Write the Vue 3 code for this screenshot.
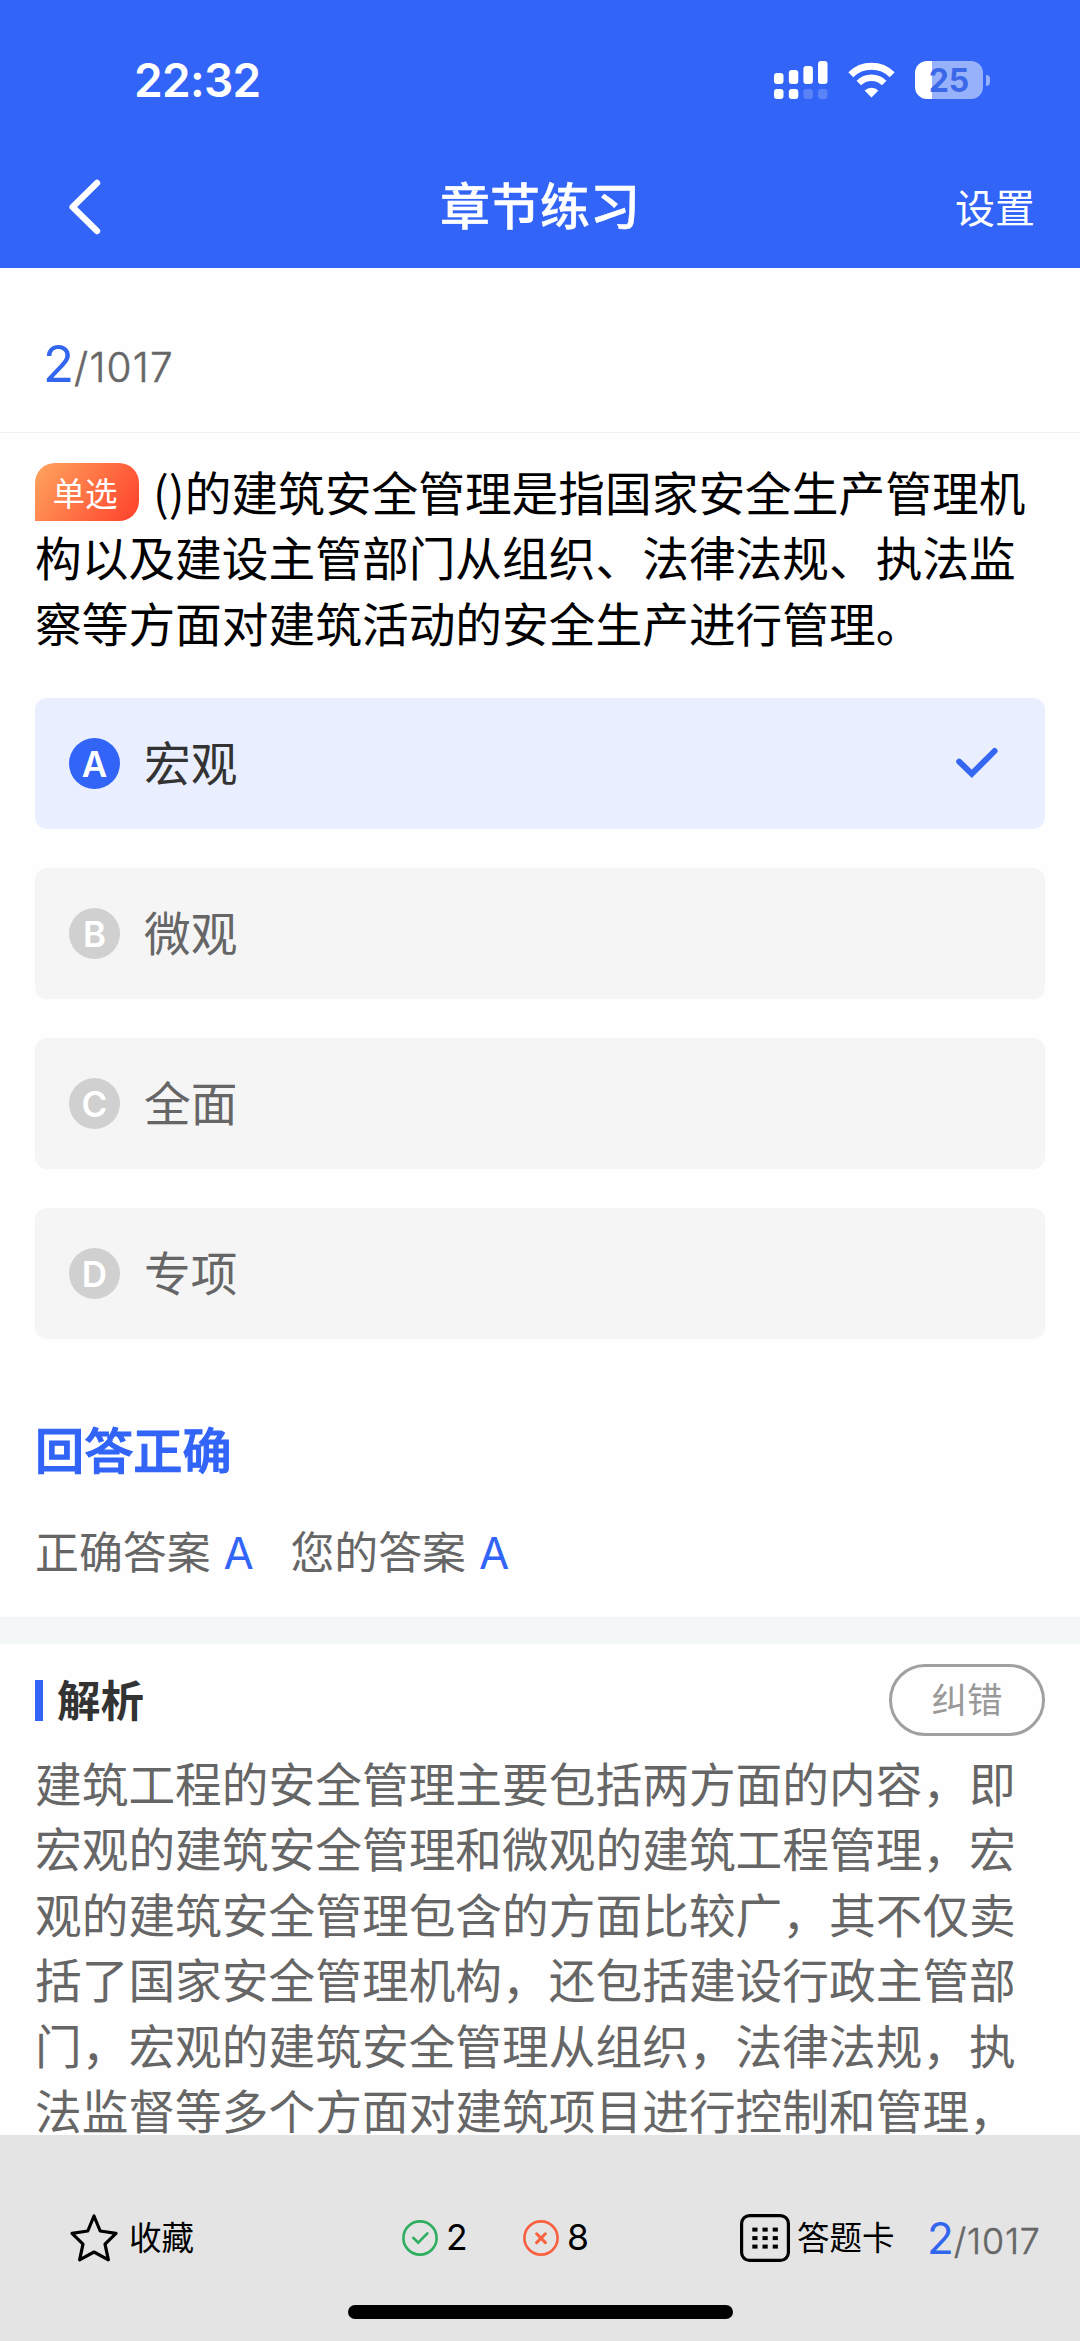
<script setup>
const options = [
  { key: 'A', text: '宏观', active: true },
  { key: 'B', text: '微观', active: false },
  { key: 'C', text: '全面', active: false },
  { key: 'D', text: '专项', active: false },
]
const dots = [0, 1, 2].flatMap((r) => [0, 1, 2].map((c) => ({ x: 12.3 + c * 10.2, y: 13.6 + r * 8.5 })))
</script>

<template>
  <div class="page">
    <header class="top">
      <div class="status">
        <span class="time">22:32</span>
        <div class="indicators">
          <svg class="signal" width="54" height="38" viewBox="0 0 54 38" fill="#fff">
            <rect x="0" y="12" width="9.5" height="11" rx="3" />
            <rect x="14.8" y="9" width="9.5" height="14" rx="3" />
            <rect x="29.4" y="5" width="9.5" height="18" rx="3" />
            <rect x="44" y="0" width="9.5" height="23" rx="3" />
            <rect x="0" y="28" width="9.5" height="10" rx="3" />
            <rect x="14.8" y="28" width="9.5" height="10" rx="3" />
            <rect x="29.4" y="28" width="9.5" height="10" rx="3" opacity="0.2" />
            <rect x="44" y="28" width="9.5" height="10" rx="3" opacity="0.2" />
          </svg>
          <svg class="wifi" width="47" height="36" viewBox="0 0 47 36" fill="none">
            <path d="M2.8 12.8 A29.5 29.5 0 0 1 44.2 12.8" stroke="#fff" stroke-width="7" />
            <path d="M10.8 21 A18 18 0 0 1 36.2 21" stroke="#fff" stroke-width="6.4" />
            <path d="M23.5 35.4 L16.6 28.4 A10.5 10.5 0 0 1 30.4 28.4 Z" fill="#fff" />
          </svg>
          <div class="battery">
            <div class="cell"><span>25</span></div>
            <i class="nub"></i>
          </div>
        </div>
      </div>
      <div class="nav">
        <svg class="back" width="36" height="58" viewBox="0 0 36 58" fill="none">
          <path d="M30 5 L5.6 29 L30 53" stroke="#fff" stroke-width="6.4" stroke-linecap="round" stroke-linejoin="round" />
        </svg>
        <h1>章节练习</h1>
        <span class="setting">设置</span>
      </div>
    </header>

    <div class="progress"><b>2</b><span>/1017</span></div>

    <section class="quiz">
      <p class="stem"><span class="tag">单选</span>()的建筑安全管理是指国家安全生产管理机构以及建设主管部门从组织、法律法规、执法监察等方面对建筑活动的安全生产进行管理。</p>
      <ul class="options">
        <li v-for="o in options" :key="o.key" :class="{ active: o.active }">
          <span class="letter">{{ o.key }}</span>
          <span class="label">{{ o.text }}</span>
          <svg v-if="o.active" class="check" width="42" height="32" viewBox="0 0 42 32" fill="none">
            <path d="M3.2 14.6 L15.8 26.8 L38.6 4" stroke="#3567f0" stroke-width="6" stroke-linecap="round" />
          </svg>
        </li>
      </ul>
      <h2>回答正确</h2>
      <div class="answers">
        <span class="pair">正确答案<em>A</em></span>
        <span class="pair">您的答案<em>A</em></span>
      </div>
    </section>

    <section class="analysis">
      <div class="head">
        <i class="mark"></i>
        <h3>解析</h3>
        <span class="fix">纠错</span>
      </div>
      <p class="body">建筑工程的安全管理主要包括两方面的内容，即宏观的建筑安全管理和微观的建筑工程管理，宏观的建筑安全管理包含的方面比较广，其不仅卖括了国家安全管理机构，还包括建设行政主管部门，宏观的建筑安全管理从组织，法律法规，执法监督等多个方面对建筑项目进行控制和管理，</p>
    </section>

    <footer class="bar">
      <div class="tools">
        <div class="fav">
          <svg width="50" height="50" viewBox="0 0 50 50" fill="none">
            <path d="M25 3 L31.2 18 L47 20.4 L36 31.2 L39.4 46.8 L25 39 L10.6 46.8 L14 31.2 L3 20.4 L18.8 18 Z" stroke="#000" stroke-width="3.2" stroke-linejoin="round" />
          </svg>
          <span>收藏</span>
        </div>
        <div class="count right-count">
          <svg width="36" height="36" viewBox="0 0 36 36" fill="none" stroke="#2fae60">
            <circle cx="18" cy="18" r="16.6" stroke-width="2.6" />
            <path d="M11.2 17.8 L16.2 22.6 L25.4 13.4" stroke-width="2.6" stroke-linecap="round" />
          </svg>
          <span>2</span>
        </div>
        <div class="count wrong-count">
          <svg width="36" height="36" viewBox="0 0 36 36" fill="none" stroke="#f9603f">
            <circle cx="18" cy="18" r="16.6" stroke-width="2.6" />
            <path d="M13.6 13.8 L22.4 22.6 M22.4 13.8 L13.6 22.6" stroke-width="3" stroke-linecap="round" />
          </svg>
          <span>8</span>
        </div>
        <div class="sheet">
          <svg width="50" height="48" viewBox="0 0 50 48" fill="none">
            <rect x="1.6" y="1.6" width="46.8" height="44.8" rx="8" stroke="#000" stroke-width="3.2" />
            <rect v-for="(d, i) in dots" :key="i" :x="d.x" :y="d.y" width="5.2" height="4" fill="#000" />
          </svg>
          <span>答题卡</span>
        </div>
        <div class="progress small"><b>2</b><span>/1017</span></div>
      </div>
      <i class="home"></i>
    </footer>
  </div>
</template>

<style>
body {
  margin: 0;
  background: #fff;
}
</style>

<style scoped>
.page {
  width: 1080px;
  height: 2341px;
  overflow: hidden;
  display: flex;
  flex-direction: column;
  background: #fefefe;
  font-family: Inter, "Noto Sans CJK SC", sans-serif;
  color: #000;
}
h1, h2, h3, p, ul {
  margin: 0;
  padding: 0;
}
i, em {
  font-style: normal;
}
svg {
  display: block;
  flex: none;
}
.top {
  flex: none;
  height: 268px;
  background: #3164f7;
  color: #fff;
}
.status {
  height: 160px;
  display: flex;
  justify-content: space-between;
  padding: 0 90px 0 134px;
}
.time {
  font-size: 46px;
  line-height: 60px;
  font-weight: 600;
  letter-spacing: -0.7px;
  padding-top: 50px;
}
.indicators {
  display: flex;
  padding-top: 61px;
}
.wifi {
  margin: 1px 20px 0 20px;
}
.battery {
  display: flex;
  align-items: center;
  height: 38px;
  gap: 3px;
}
.cell {
  width: 68px;
  height: 38px;
  border-radius: 12px;
  background: linear-gradient(90deg, #fff 17.5px, #98b1fb 17.5px);
  text-align: center;
  color: #3b68e9;
  font-size: 32px;
  font-weight: 700;
  line-height: 39px;
}
.nub {
  width: 4px;
  height: 11px;
  border-radius: 0 5px 5px 0;
  background: #98b1fb;
}
.nav {
  height: 94px;
  display: grid;
  grid-template-columns: 1fr auto 1fr;
  align-items: center;
  padding: 0 45px 0 67px;
}
.nav h1 {
  font-size: 50px;
  line-height: 60px;
  font-weight: 500;
  margin-left: -22px;
  -webkit-text-stroke: 0.4px #fff;
}
.setting {
  justify-self: end;
  font-size: 40px;
  line-height: 60px;
  padding-top: 4px;
}
.progress {
  flex: none;
  height: 165px;
  box-sizing: border-box;
  border-bottom: 1px solid #f0f0f0;
  padding: 66px 0 0 43px;
  line-height: 60px;
  white-space: nowrap;
}
.progress b {
  font-size: 51px;
  font-weight: 400;
  color: #3366ee;
}
.progress span {
  font-size: 40.5px;
  font-weight: 300;
  letter-spacing: 1.2px;
  color: #666;
  -webkit-text-stroke: 0.5px #666;
}
.quiz {
  flex: none;
  padding: 30px 35px 0;
  height: 1184px;
  box-sizing: border-box;
}
.stem,
.body {
  font-family: "Noto Sans CJK SC", sans-serif;
  font-size: 46.67px;
  line-height: 65.4px;
  letter-spacing: 0.05px;
  word-break: break-all;
}
.stem {
  margin-top: -5px;
}
.tag {
  display: inline-block;
  vertical-align: top;
  box-sizing: border-box;
  width: 104px;
  height: 58px;
  margin: 5px 14px 0 0;
  padding-right: 4px;
  border-radius: 20px 20px 20px 0;
  background: linear-gradient(125deg, #ffa05c 5%, #ff4a30 90%);
  color: #fff;
  font-size: 32.5px;
  line-height: 57px;
  text-align: center;
}
.options {
  list-style: none;
  padding-top: 44px;
}
.options li {
  display: flex;
  align-items: center;
  height: 130.5px;
  margin-bottom: 39.5px;
  padding: 0 47px 0 34px;
  border-radius: 12px;
  background: #f5f5f5;
  color: #666;
}
.options li.active {
  background: #e9effe;
  color: #333;
}
.letter {
  width: 51px;
  height: 51px;
  border-radius: 50%;
  background: #d1d0d0;
  color: #fff;
  font-size: 35px;
  font-weight: 600;
  line-height: 52px;
  text-align: center;
}
.active .letter {
  background: #3164f7;
}
.label {
  flex: 1;
  padding: 1px 0 0 24px;
  font-size: 46.67px;
  line-height: 60px;
}
h2 {
  font-size: 49.2px;
  line-height: 60px;
  font-weight: 500;
  color: #3164f7;
  margin-top: 82px;
  -webkit-text-stroke: 1.1px #3164f7;
}
.answers {
  display: flex;
  gap: 36.5px;
  margin-top: 42px;
  font-size: 43.9px;
  line-height: 60px;
  color: #666;
}
.answers em {
  margin-left: 13px;
  color: #3164f7;
}
.analysis {
  flex: none;
  height: 518px;
  box-sizing: border-box;
  overflow: hidden;
  border-top: 27px solid #f3f7f8;
  padding: 20px 35px 0;
}
.head {
  display: flex;
  align-items: center;
  height: 72px;
}
.mark {
  width: 8px;
  height: 41px;
  background: #3164f7;
}
h3 {
  flex: 1;
  margin-left: 14px;
  font-size: 43.5px;
  line-height: 60px;
  font-weight: 700;
  color: #333;
  padding-top: 1px;
}
.fix {
  box-sizing: border-box;
  width: 156px;
  height: 72px;
  border: 3px solid #a0a0a0;
  border-radius: 36px;
  text-align: center;
  font-size: 35.5px;
  line-height: 67px;
  color: #999;
}
.body {
  margin-top: 13px;
  color: #666;
}
.bar {
  flex: none;
  height: 206px;
  background: #e4e4e4;
}
.tools {
  height: 170px;
  display: flex;
  padding: 0 0 0 69px;
}
.tools > div {
  display: flex;
  align-items: center;
  height: 206px;
}
.tools > .fav {
  width: 333px;
}
.fav span,
.sheet span {
  font-size: 32.5px;
  line-height: 50px;
  padding-top: 2px;
}
.fav span {
  margin-left: 10px;
}
.count {
  width: 121px;
  gap: 8px;
  font-size: 35.5px;
  line-height: 50px;
}
.wrong-count {
  width: 217px;
}
.sheet {
  width: 187px;
  gap: 7px;
}
.tools > .small {
  height: auto;
  display: block;
  border: 0;
  padding: 73px 0 0;
}
.small b {
  font-size: 44px;
}
.small span {
  font-size: 35.8px;
  letter-spacing: 0.8px;
}
.home {
  display: block;
  width: 385px;
  height: 14px;
  border-radius: 7px;
  background: #000;
  margin: 0 0 0 348px;
}
</style>
